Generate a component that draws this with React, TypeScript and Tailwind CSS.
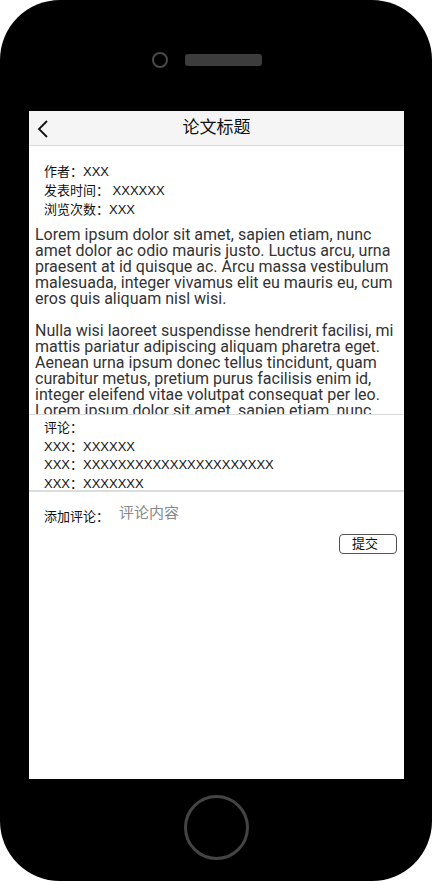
import React from "react";

const cn = { fontFamily: '"Liberation Sans", "Noto Sans CJK SC", sans-serif' };
const roboto = { fontFamily: 'Roboto, "Noto Sans CJK SC", sans-serif' };

export default function App() {
  return (
    <div className="w-[432px] h-[881px] bg-white">
      <div className="relative w-[432px] h-[881px] bg-black rounded-[60px] flex flex-col items-center">
        {/* top: camera + speaker */}
        <div className="h-[111px] w-full flex items-start justify-start">
          <div className="mt-[52px] ml-[152px] flex items-center gap-[17px]">
            <div className="w-[16px] h-[16px] rounded-full border-[2.5px] border-[#4a4a4a]" />
            <div className="w-[77px] h-[12px] rounded-[3px] bg-[#3c3c3c]" />
          </div>
        </div>
        {/* screen */}
        <div className="w-[375px] h-[668px] bg-white flex flex-col ml-[1px]" style={cn}>
          {/* header */}
          <div className="h-[35px] bg-[#f5f5f5] border-b border-[#d9d9d9] flex items-center relative">
            <svg className="absolute left-[8px] top-[9px]" width="12" height="18" viewBox="0 0 12 18">
              <path d="M10 1 L2 9 L10 17" fill="none" stroke="#111" strokeWidth="1.8" />
            </svg>
            <div className="w-full text-center text-[17px] leading-[20px] text-[#111]">论文标题</div>
          </div>
          {/* article */}
          <div className="h-[269px] overflow-hidden border-b border-[#d9d9d9]">
            <div className="pt-[16px] pl-[15px] text-[13px] leading-[19px] text-[#111]">
              <div>作者：XXX</div>
              <div>发表时间： XXXXXX</div>
              <div>浏览次数：XXX</div>
            </div>
            <div className="mt-[8px] px-[6px] text-[16px] leading-[16px] text-[#333]" style={roboto}>
              <p>
                Lorem ipsum dolor sit amet, sapien etiam, nunc amet dolor ac odio mauris justo. Luctus arcu, urna
                praesent at id quisque ac. Arcu massa vestibulum malesuada, integer vivamus elit eu mauris eu, cum
                eros quis aliquam nisl wisi.
              </p>
              <p className="mt-[16px]">
                Nulla wisi laoreet suspendisse hendrerit facilisi, mi mattis pariatur adipiscing aliquam pharetra
                eget. Aenean urna ipsum donec tellus tincidunt, quam curabitur metus, pretium purus facilisis enim id,
                integer eleifend vitae volutpat consequat per leo. Lorem ipsum dolor sit amet, sapien etiam, nunc
              </p>
            </div>
          </div>
          {/* comments */}
          <div className="h-[77px] overflow-hidden border-b-2 border-[#dcdcdc] pt-[4px] pl-[15px] text-[13px] leading-[18.5px] text-[#111]">
            <div>评论：</div>
            <div>XXX：XXXXXX</div>
            <div>XXX：XXXXXXXXXXXXXXXXXXXXXX</div>
            <div>XXX：XXXXXXX</div>
          </div>
          {/* add comment */}
          <div className="flex items-center pl-[15px] mt-[11px] h-[20px]">
            <span className="text-[13px] text-[#111] mt-[7px]">添加评论：</span>
            <span className="ml-[10px] text-[15px] text-[#888]">评论内容</span>
          </div>
          <div className="flex justify-end pr-[7px] mt-[11px]">
            <div className="w-[58px] h-[20px] border border-[#555] rounded-[4px] flex items-center pl-[12px] text-[13px] text-[#111]">
              提交
            </div>
          </div>
        </div>
        {/* bottom: home button */}
        <div className="flex-1 w-full flex items-start justify-center">
          <div className="mt-[16px] w-[65px] h-[65px] rounded-full border-[3px] border-[#444]" />
        </div>
      </div>
    </div>
  );
}
